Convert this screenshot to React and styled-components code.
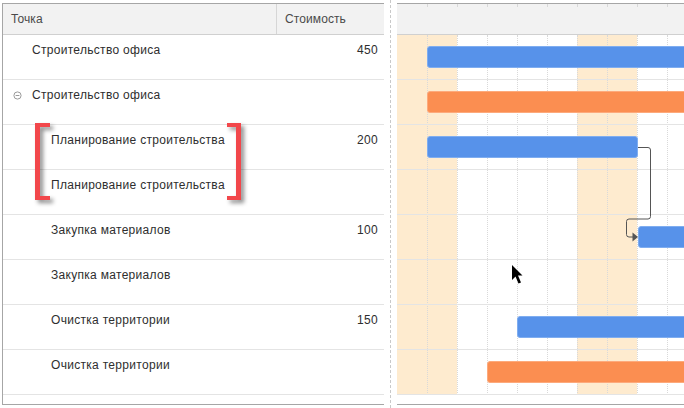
import React from 'react';
import styled, { createGlobalStyle } from 'styled-components';

const GlobalStyle = createGlobalStyle`
  html, body {
    margin: 0;
    padding: 0;
    background: #fff;
  }

  body {
    font-family: "Liberation Sans", Arial, sans-serif;
    font-size: 12px;
    letter-spacing: 0.3px;
    color: #333;
  }
`;

const COL = 30;
const WEEKENDS = [0, 1, 6, 7];

const tasks = [
  { name: 'Строительство офиса', level: 1, cost: '450', bar: { start: 1, len: 20, color: 'blue' } },
  { name: 'Строительство офиса', level: 1, toggle: true, bar: { start: 1, len: 20, color: 'orange' } },
  { name: 'Планирование строительства', level: 2, cost: '200', bar: { start: 1, len: 7.04, color: 'blue' } },
  { name: 'Планирование строительства', level: 2 },
  { name: 'Закупка материалов', level: 2, cost: '100', bar: { start: 8.04, len: 10, color: 'blue' } },
  { name: 'Закупка материалов', level: 2 },
  { name: 'Очистка территории', level: 2, cost: '150', bar: { start: 4, len: 12, color: 'blue' } },
  { name: 'Очистка территории', level: 2, bar: { start: 3, len: 12, color: 'orange' } },
];

const barColors = {
  blue: { fill: '#5792ea', edge: '#7fadf0' },
  orange: { fill: '#fb8e51', edge: '#fdaa7c' },
};

const Page = styled.div`
  position: relative;
  display: flex;
  height: 408px;
  overflow: hidden;
`;

const Grid = styled.section`
  display: flex;
  flex-direction: column;
  width: 382px;
  height: 402px;
  margin: 3px 0 0 2px;
  box-sizing: border-box;
  border: 1px solid #a6a6a6;
  border-right: none;
`;

const GridHeader = styled.div`
  display: flex;
  height: 30px;
  background: #f2f2f2;
  border-bottom: 1px solid #d0d0d0;
  color: #4a4a4a;
  letter-spacing: 0.1px;
`;

const HeadCell = styled.div`
  display: flex;
  align-items: center;
  box-sizing: border-box;
  padding-left: 8px;
  ${p => p.$wide ? 'width: 274px; border-right: 1px solid #d6d6d6;' : 'flex: 1;'}
`;

const GridRow = styled.div`
  display: flex;
  height: 44px;
  border-bottom: 1px solid #e4e4e4;
  line-height: 14px;
`;

const NameCell = styled.div`
  display: flex;
  align-items: flex-start;
  width: 274px;
  box-sizing: border-box;
  padding-top: 8px;
  padding-left: ${p => p.$indent}px;
  color: #2e2e2e;
  white-space: nowrap;
`;

const CostCell = styled.div`
  flex: 1;
  padding-top: 8px;
  padding-right: 6px;
  text-align: right;
  color: #2e2e2e;
`;

const Toggle = styled.svg`
  width: 9px;
  height: 9px;
  margin: 3px 10px 0 0;
  flex: none;
`;

const Splitter = styled.div`
  width: 0;
  height: 408px;
  margin-left: 6px;
  border-left: 1px dashed #c9c9c9;
`;

const Gantt = styled.section`
  flex: 1;
  display: flex;
  flex-direction: column;
  height: 402px;
  margin: 3px 0 0 6px;
  box-sizing: border-box;
  border-top: 1px solid #a6a6a6;
  border-bottom: 1px solid #a6a6a6;
  overflow: hidden;
`;

const Scale = styled.div`
  display: flex;
  height: 30px;
  flex: none;
  background: #f2f2f2;
  border-bottom: 1px solid #d0d0d0;
`;

const Tick = styled.div`
  width: ${COL}px;
  flex: none;
  box-sizing: border-box;
  background: ${p => p.$first ? 'none' : 'linear-gradient(#d8d8d8, #d8d8d8) left top / 1px 3px no-repeat'};
`;

const Chart = styled.div`
  display: grid;
  flex: none;
`;

const Columns = styled.div`
  grid-area: 1 / 1;
  display: flex;
`;

const Column = styled.div`
  width: ${COL}px;
  flex: none;
  box-sizing: border-box;
  background: ${p => p.$weekend ? '#feebcf' : 'transparent'};
  border-left: ${p => p.$first ? 'none' : '1px dotted #d9d9d9'};
`;

const Lanes = styled.div`
  grid-area: 1 / 1;
  display: flex;
  flex-direction: column;
`;

const Lane = styled.div`
  display: flex;
  align-items: center;
  height: 44px;
  border-bottom: 1px solid #e4e4e4;
`;

const Bar = styled.div`
  flex: none;
  height: 22px;
  box-sizing: border-box;
  border-radius: 3px;
  background: ${p => barColors[p.$color].fill};
  border: 1px solid ${p => barColors[p.$color].edge};
`;

const Links = styled.svg`
  grid-area: 1 / 1;
  width: 287px;
  height: 360px;
  pointer-events: none;
`;

const Brackets = styled.svg`
  position: absolute;
  left: 30px;
  top: 118px;
  width: 222px;
  height: 92px;
  overflow: visible;
  filter: drop-shadow(3px 3px 2px rgba(0, 0, 0, 0.45));
`;

const Cursor = styled.svg`
  position: absolute;
  left: 511px;
  top: 264px;
  width: 13px;
  height: 21px;
`;

const App = () => {
  const cols = Array.from({ length: 10 }, (_, i) => i);

  return (
    <Page>
      <GlobalStyle />
      <Grid>
        <GridHeader>
          <HeadCell $wide>Точка</HeadCell>
          <HeadCell>Стоимость</HeadCell>
        </GridHeader>
        {tasks.map((t, i) => (
          <GridRow key={i}>
            <NameCell $indent={t.toggle ? 10 : t.level === 1 ? 29 : 48}>
              {t.toggle && (
                <Toggle viewBox="0 0 9 9">
                  <circle cx="4.5" cy="4.5" r="3.6" fill="none" stroke="#9a9a9a" strokeWidth="1" />
                  <line x1="2.6" y1="4.5" x2="6.4" y2="4.5" stroke="#9a9a9a" strokeWidth="1" />
                </Toggle>
              )}
              {t.name}
            </NameCell>
            <CostCell>{t.cost}</CostCell>
          </GridRow>
        ))}
      </Grid>

      <Splitter />

      <Gantt>
        <Scale>
          {cols.map(c => <Tick key={c} $first={c === 0} />)}
        </Scale>
        <Chart>
          <Columns>
            {cols.map(c => (
              <Column key={c} $first={c === 0} $weekend={WEEKENDS.includes(c)} />
            ))}
          </Columns>
          <Lanes>
            {tasks.map((t, i) => (
              <Lane key={i}>
                {t.bar && (
                  <Bar
                    $color={t.bar.color}
                    style={{ marginLeft: t.bar.start * COL, width: t.bar.len * COL }}
                  />
                )}
              </Lane>
            ))}
          </Lanes>
          <Links viewBox="0 0 287 360">
            <path
              d="M241 112.5 H251 Q253.5 112.5 253.5 115 V181.5 Q253.5 184 251 184 H232 Q229.5 184 229.5 186.5 V199.5 Q229.5 202 232 202 H236"
              fill="none"
              stroke="#555"
              strokeWidth="1"
            />
            <path d="M235.5 197.5 L241 202 L235.5 206.5 Z" fill="#555" />
          </Links>
        </Chart>
      </Gantt>

      <Brackets viewBox="0 0 222 92">
        <g fill="#f2474b">
          <rect x="5" y="5" width="5" height="77" />
          <rect x="5" y="5" width="15" height="4" />
          <rect x="5" y="78" width="15" height="4" />
          <rect x="206" y="5" width="5" height="77" />
          <rect x="197" y="5" width="14" height="4" />
          <rect x="197" y="78" width="14" height="4" />
        </g>
      </Brackets>

      <Cursor viewBox="0 0 13 21">
        <path d="M1 1 L1 16 L4.5 12.5 L7.5 19.5 L10 18.5 L7 11.5 L11.5 11.5 Z" fill="#000" />
      </Cursor>
    </Page>
  );
};

export default App;
